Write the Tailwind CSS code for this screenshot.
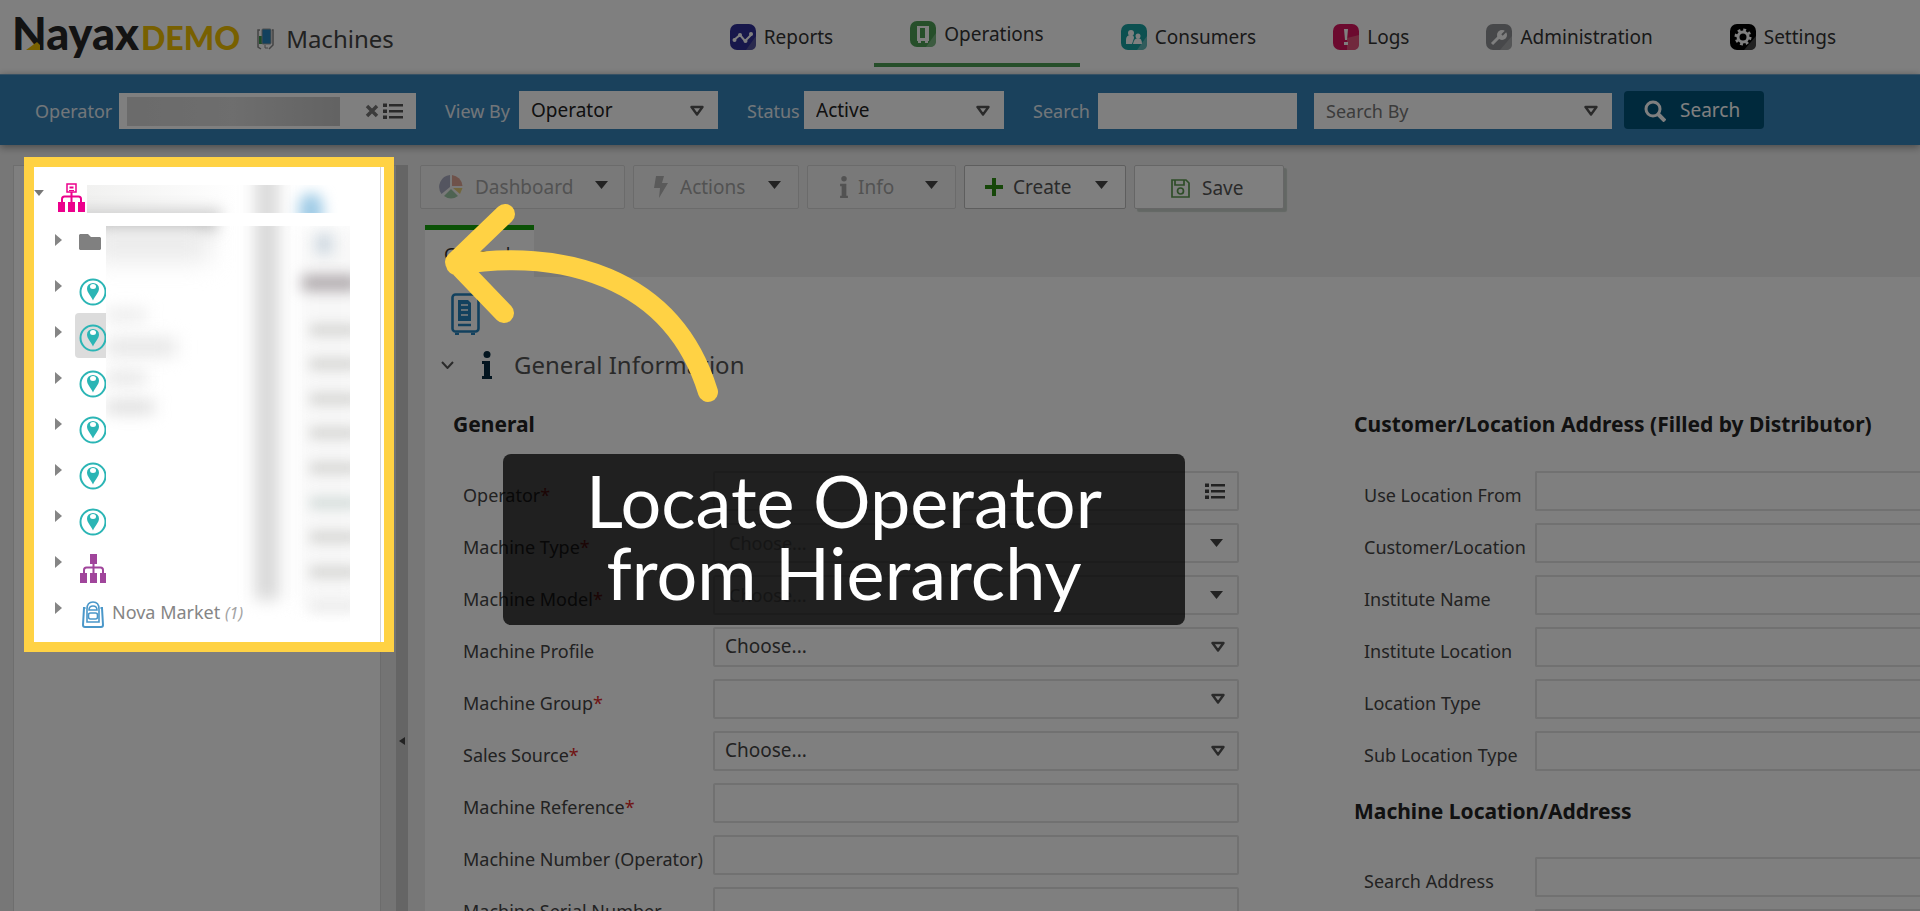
<!DOCTYPE html>
<html lang="en">
<head>
<meta charset="utf-8">
<title>Nayax Demo - Machines</title>
<script src="https://cdn.jsdelivr.net/npm/@tailwindcss/browser@4"></script>
</head>
<body class="font-['Noto_Sans',sans-serif] text-[#333]">
<svg class="hidden">
  <symbol id="tri" viewBox="0 0 14 12"><path d="M1.500 2h11L7 9.500z" fill="none" stroke="currentColor" stroke-width="2.400" stroke-linejoin="round"/></symbol>
  <symbol id="caret" viewBox="0 0 13 8"><path d="M0 0h13L6.500 8z" fill="currentColor"/></symbol>
  <symbol id="right" viewBox="0 0 7 12"><path d="M0 0l7 6-7 6z" fill="currentColor"/></symbol>
  <symbol id="list" viewBox="0 0 20 17"><path d="M0 .5h4v3.500H0zM0 6.500h4v3.500H0zM0 12.500h4v3.500H0zM6 1h14v2.500H6zM6 7h14v2.500H6zM6 13h14v2.500H6z" fill="currentColor"/></symbol>
  <symbol id="info" viewBox="0 0 10 28"><circle cx="5" cy="3.500" r="3.500" fill="currentColor"/><path d="M0 10h8v15h2v3H0v-3h2V13H0z" fill="currentColor"/></symbol>
  <symbol id="pin" viewBox="0 0 28 28"><circle cx="14" cy="14" r="12.500" fill="none" stroke="#2bb5b5" stroke-width="2"/><path d="M14 22.500C12 18 8 14.500 8 10.500a6 5.500 0 0 1 12 0c0 4-4 7.500-6 12z" fill="#2bb5b5"/><ellipse cx="14" cy="8.500" rx="3" ry="2.500" fill="#fff"/></symbol>
  <symbol id="tree" viewBox="0 0 27 29"><path d="M13.500 9v11M4 20v-4q0-2.500 2.500-2.500h14q2.500 0 2.500 2.500v4" fill="none" stroke="currentColor" stroke-width="2"/><path d="M0 19h7v10H0zM10 19h7v10h-7zM20 19h7v10h-7z" fill="currentColor"/></symbol>
</svg>

<div class="relative flex h-screen flex-col overflow-hidden bg-[#efefef]">
  <header class="flex h-[74px] shrink-0 items-center bg-white pl-3 pr-12">
    <div class="relative mb-2 flex items-baseline gap-0.5 font-['Lato',sans-serif] font-black leading-none">
      <span class="text-[45px] text-[#262626]">Nayax</span><span class="text-[32px] text-[#f0c000]">DEMO</span>
      <svg class="absolute left-[14px] top-[31px] h-2 w-3.5" viewBox="0 0 14 8"><path d="M0 8L11 0l3 3v5z" fill="#f0c000"/></svg>
    </div>
    <svg class="ml-4 mt-1 h-[22px] w-[18px]" viewBox="0 0 18 22" fill="none"><path d="M4 2H2v17l3 2M16 2h1v15l-4 4" stroke="#888" stroke-width="1.500"/><path d="M3 8h5v8H3z" fill="#3a9a4c"/><rect x="6" y="1" width="9" height="15" rx="1" fill="#2583bd" stroke="#999"/><path d="M9 17v3h3" stroke="#888"/></svg>
    <h1 class="ml-3 mt-1 text-2xl text-[#444]">Machines</h1>
    <nav class="ml-auto flex h-full items-center gap-[5px] text-[19px]">
      <a href="#" class="flex items-center gap-2 px-9"><svg class="size-[26px]" viewBox="0 0 26 26"><rect width="26" height="26" rx="7" fill="#2e2e96"/><path d="M16 26l10-14v8q0 6-6 6z" fill="#55559c"/><path d="M4 16l6-5 5 6 7-7" fill="none" stroke="#fff" stroke-width="2"/><g fill="#fff"><circle cx="4.500" cy="16" r="2"/><circle cx="10" cy="11" r="2"/><circle cx="15.500" cy="17" r="2"/><circle cx="21" cy="10" r="2"/></g></svg>Reports</a>
      <a href="#" class="relative flex h-full items-center gap-2 px-9 pb-1.5"><svg class="size-[26px]" viewBox="0 0 26 26"><rect width="26" height="26" rx="7" fill="#4c9e55"/><path d="M16 26l10-14v8q0 6-6 6z" fill="#79b780"/><path d="M7 5h12v15H7z" fill="#fff"/><path d="M10 7h5v10h-5z" fill="#4c9e55"/><path d="M8 20h3v2H8zM15 20h3v2h-3z" fill="#fff"/></svg>Operations<span class="absolute inset-x-0 bottom-[7px] h-1 bg-[#4c9e55]"></span></a>
      <a href="#" class="flex items-center gap-2 px-9"><svg class="size-[26px]" viewBox="0 0 26 26"><rect width="26" height="26" rx="7" fill="#18a0a0"/><path d="M16 26l10-14v8q0 6-6 6z" fill="#62b8b8"/><g fill="#fff"><circle cx="10" cy="9" r="3"/><path d="M5 20v-4q0-5 5-5 3 0 3 3l-2 6z"/><circle cx="17" cy="12" r="2.500"/><path d="M12 20q1-6 5-6t4 6z"/></g></svg>Consumers</a>
      <a href="#" class="flex items-center gap-2 px-9"><svg class="size-[26px]" viewBox="0 0 26 26"><rect width="26" height="26" rx="7" fill="#d8145e"/><path d="M14 26V14l12-3v9q0 6-6 6z" fill="#e2527b"/><path d="M11 5h4l-1 11h-2zM11 18h4v3h-4z" fill="#fff"/></svg>Logs</a>
      <a href="#" class="flex items-center gap-2 px-9"><svg class="size-[26px]" viewBox="0 0 26 26"><rect width="26" height="26" rx="7" fill="#8f9194"/><path d="M14 26l12-14v8q0 6-6 6z" fill="#a9abad"/><circle cx="16" cy="11" r="5" fill="#fff"/><path d="M13 13l-7 7" stroke="#fff" stroke-width="3"/><path d="M16 11l4-4" stroke="#8f9194" stroke-width="2"/></svg>Administration</a>
      <a href="#" class="flex items-center gap-2 px-9"><svg class="size-[26px]" viewBox="0 0 26 26"><rect width="26" height="26" rx="7" fill="#000"/><path d="M14 26l12-14v8q0 6-6 6z" fill="#444"/><circle cx="13" cy="13" r="5" fill="none" stroke="#fff" stroke-width="3"/><circle cx="13" cy="13" r="7" fill="none" stroke="#fff" stroke-width="3" stroke-dasharray="2.750 2.750"/></svg>Settings</a>
    </nav>
  </header>

  <form class="z-0 flex h-[71px] shrink-0 items-center border-t border-[#6fa3c8] bg-[#3482b8] pl-[35px] text-lg text-[#e4edf4] shadow-[0_2px_8px_rgba(0,0,0,0.4)]">
    <label for="fop" class="w-[84px] pt-0.5">Operator</label>
    <div class="mt-0.5 flex h-9 w-[297px] items-center bg-white pl-2">
      <input id="fop" class="h-[29px] w-[213px] bg-linear-to-r from-[#d6d6d6] via-[#dcdcdc] to-[#c6c6c6] outline-none">
      <button type="button" aria-label="Clear" class="ml-[25px] text-[#777]"><svg class="size-3.5" viewBox="0 0 14 14"><path d="M2 2l10 10M12 2L2 12" stroke="currentColor" stroke-width="3.500"/></svg></button>
      <button type="button" aria-label="Pick operator" class="ml-1 text-[#555]"><svg class="h-[17px] w-5"><use href="#list"/></svg></button>
    </div>
    <label for="fview" class="ml-[29px] w-[74px] pt-0.5">View By</label>
    <div class="relative"><select id="fview" class="h-[38px] w-[199px] appearance-none bg-white px-3 pt-0.5 text-[19px] text-[#222]"><option>Operator</option></select><svg class="pointer-events-none absolute right-3.5 top-3.5 h-3 w-3.5 text-[#555]"><use href="#tri"/></svg></div>
    <label for="fstat" class="ml-[29px] w-[57px] pt-0.5">Status</label>
    <div class="relative"><select id="fstat" class="h-[38px] w-[200px] appearance-none bg-white px-3 pt-0.5 text-[19px] text-[#222]"><option>Active</option></select><svg class="pointer-events-none absolute right-3.5 top-3.5 h-3 w-3.5 text-[#555]"><use href="#tri"/></svg></div>
    <label for="fq" class="ml-[29px] w-[65px] pt-0.5">Search</label>
    <input id="fq" class="mt-0.5 h-9 w-[199px] bg-white px-3 text-[#222]">
    <div class="relative mt-0.5 ml-[17px]"><select aria-label="Search By" class="h-9 w-[298px] appearance-none bg-white px-3 text-[#777]"><option>Search By</option></select><svg class="pointer-events-none absolute right-3.5 top-3 h-3 w-3.5 text-[#555]"><use href="#tri"/></svg></div>
    <button type="button" class="ml-3 flex h-[38px] w-[140px] items-center gap-3.5 rounded-sm bg-[#005279] pl-5 pt-0.5 text-[19px] text-white"><svg class="size-[22px]" viewBox="0 0 22 22" fill="none" stroke="#fff"><circle cx="9" cy="9" r="7" stroke-width="3"/><path d="M14 14l7 7" stroke-width="4"/></svg>Search</button>
  </form>

  <main class="flex min-h-0 flex-1 pt-5">
    <aside class="ml-[13px] flex w-[383px] shrink-0 border-l border-t border-[#dcdcdc] bg-white">
      <!-- Spotlighted hierarchy tree, raised above the page dimmer -->
      <div class="relative z-20 ml-5 mt-px h-[475px] w-[350px] shrink-0 bg-white ring-[10px] ring-[#ffd244]">
        <span class="absolute inset-y-0 right-[3px] w-px bg-[#d4d4d8]"></span>
        <ul class="text-lg text-[#858585]">
          <li class="flex h-[50px] pt-4"><svg class="mt-[7px] h-1.5 w-2.5 text-[#777]"><use href="#caret"/></svg><svg class="ml-3.5 h-[29px] w-[27px] text-[#ec008c]"><use href="#tree"/><rect x="9" y="1" width="9" height="8" fill="#fff" stroke="#ec008c" stroke-width="1.500"/><path d="M11.500 3.500h4v2h-4zM11 7h5v1h-5z" fill="#ec008c"/></svg></li>
          <li class="flex h-[46px] items-center pl-[21px]"><svg class="h-3 w-[7px]"><use href="#right"/></svg><svg class="ml-[17px] mt-1 h-4 w-[22px]" viewBox="0 0 22 16"><path d="M1 0h8l3 3h9l1 1v11l-1 1H1l-1-1V1z" fill="#808080"/></svg></li>
          <li class="flex h-[46px] items-center pl-[21px]"><svg class="h-3 w-[7px]"><use href="#right"/></svg><svg class="ml-[17px] mt-3 size-7"><use href="#pin"/></svg></li>
          <li class="flex h-[46px] items-center pl-[21px]"><svg class="h-3 w-[7px]"><use href="#right"/></svg><span class="ml-[13px] mt-1.5 flex h-[45px] items-center rounded-l-sm bg-[#dcdcdc] pl-1"><svg class="mt-1.5 size-7"><use href="#pin"/></svg></span></li>
          <li class="flex h-[46px] items-center pl-[21px]"><svg class="h-3 w-[7px]"><use href="#right"/></svg><svg class="ml-[17px] mt-3 size-7"><use href="#pin"/></svg></li>
          <li class="flex h-[46px] items-center pl-[21px]"><svg class="h-3 w-[7px]"><use href="#right"/></svg><svg class="ml-[17px] mt-3 size-7"><use href="#pin"/></svg></li>
          <li class="flex h-[46px] items-center pl-[21px]"><svg class="h-3 w-[7px]"><use href="#right"/></svg><svg class="ml-[17px] mt-3 size-7"><use href="#pin"/></svg></li>
          <li class="flex h-[46px] items-center pl-[21px]"><svg class="h-3 w-[7px]"><use href="#right"/></svg><svg class="ml-[17px] mt-3 size-7"><use href="#pin"/></svg></li>
          <li class="flex h-[46px] items-center pl-[21px]"><svg class="h-3 w-[7px]"><use href="#right"/></svg><svg class="ml-[18px] mt-3 h-[29px] w-[27px] text-[#a0459b]"><use href="#tree"/><path d="M10 0h7v10h-7z" fill="currentColor"/></svg></li>
          <li class="flex h-[46px] items-center pl-[21px]"><svg class="h-3 w-[7px]"><use href="#right"/></svg><svg class="ml-5 mt-3 h-[27px] w-[22px]" viewBox="0 0 22 27" fill="none" stroke="#4a97c9" stroke-width="1.600"><path d="M3.500 7H2L1 24q0 2 2 2h16q2 0 2-2L20 7h-1.500" stroke-width="2"/><path d="M5 21V8q0-7 6-7t6 7v13z"/><path d="M7 9q0-4 4-4t4 4z"/><rect x="6.500" y="12" width="9" height="6" rx="2"/></svg><span class="ml-2 mt-2">Nova Market <i class="text-base text-[#a3a3a3]">(1)</i></span></li>
        </ul>
        <!-- Redacted names -->
        <div class="absolute left-[53px] top-[18px] h-7 w-[253px] overflow-hidden bg-linear-to-r from-[#f1f1f0] to-white to-60%">
          <span class="absolute -left-4 top-6 h-6 w-[150px] bg-[#cfcfcf] blur-[7px]"></span>
          <span class="absolute left-[168px] -top-4 h-16 w-6 bg-[#dadada] blur-[8px]"></span>
          <span class="absolute left-[212px] top-2 h-9 w-6 rounded-full bg-[#9fcbe6] blur-[7px]"></span>
        </div>
        <div class="absolute left-[72px] top-[59px] h-[396px] w-[244px] overflow-hidden">
          <span class="absolute inset-x-0 top-0 h-[365px] bg-white"></span>
          <span class="absolute -left-4 -top-3 h-4 w-[125px] bg-[#999] blur-[8px]"></span>
          <span class="absolute -left-4 top-0 h-9 w-[120px] bg-[#ebebeb] blur-[12px]"></span>
          <span class="absolute left-0 top-[83px] h-3 w-10 bg-[#e9e9e9] blur-[8px]"></span>
          <span class="absolute left-0 top-[113px] h-4 w-[70px] bg-[#e2e2e2] blur-[9px]"></span>
          <span class="absolute left-0 top-[146px] h-3 w-10 bg-[#e2e2e2] blur-[8px]"></span>
          <span class="absolute left-0 top-[175px] h-3 w-12 bg-[#d8d8d8] blur-[8px]"></span>
          <span class="absolute left-[149px] -top-4 h-[390px] w-6 bg-[#d8d8d8] blur-[8px]"></span>
          <span class="absolute -right-2 top-0 h-[380px] w-[56px] bg-[#f7f7f7] blur-[10px]"></span>
          <span class="absolute left-[210px] top-2 h-5 w-4 bg-[#ccd7e0] blur-[7px]"></span>
          <span class="absolute -right-2 top-[49px] h-4 w-14 bg-[#b0aaad] blur-[7px]"></span>
          <span class="absolute -right-2 top-[98px] h-3 w-12 bg-[#d8d8d6] blur-[6px]"></span>
          <span class="absolute -right-2 top-[132px] h-3 w-12 bg-[#d8d8d6] blur-[6px]"></span>
          <span class="absolute -right-2 top-[167px] h-3 w-12 bg-[#d8d8d6] blur-[6px]"></span>
          <span class="absolute -right-2 top-[201px] h-3 w-12 bg-[#d8d8d6] blur-[6px]"></span>
          <span class="absolute -right-2 top-[236px] h-3 w-12 bg-[#d8d8d6] blur-[6px]"></span>
          <span class="absolute -right-2 top-[271px] h-3 w-12 bg-[#d6dedc] blur-[6px]"></span>
          <span class="absolute -right-2 top-[305px] h-3 w-12 bg-[#d8d8d6] blur-[6px]"></span>
          <span class="absolute -right-2 top-[340px] h-3 w-12 bg-[#d8d8d6] blur-[6px]"></span>
          <span class="absolute -right-2 top-[374px] h-3 w-12 bg-[#ececec] blur-[6px]"></span>
        </div>
      </div>
      <div class="-ml-1 flex-1 border-l border-[#d8d8d8] bg-[#e8e8e8]"></div>
    </aside>
    <div class="flex w-3 shrink-0 items-start justify-center bg-[#cacaca] pt-[572px]"><svg class="h-2 w-1.5" viewBox="0 0 6 8"><path d="M6 0v8L0 4z" fill="#444"/></svg></div>

    <section class="min-w-0 flex-1">
      <div class="ml-3 flex h-11 gap-2 text-[19px]">
        <button class="flex w-[205px] items-center rounded-xs border border-[#d6d6d6] bg-[#f3f3f3] pl-[18px] text-[#a5a5a5]"><svg class="mr-3 size-6" viewBox="0 0 24 24"><path d="M11 12V0A12 12 0 0 0 2.500 19z" fill="#a9abc0"/><path d="M13 0v11h10.500A12 12 0 0 0 13 0z" fill="#dfa595"/><path d="M14 13h9.500l-2.500 6z" fill="#e5cf7a"/><path d="M12 14l7 7q-7 5-14 0z" fill="#9dc7a5"/></svg>Dashboard<svg class="ml-auto mr-4 mb-1 h-2 w-[13px] text-[#444]"><use href="#caret"/></svg></button>
        <button class="flex w-[166px] items-center rounded-xs border border-[#d6d6d6] bg-[#f3f3f3] pl-5 text-[#a5a5a5]"><svg class="mr-3 h-[22px] w-3.5" viewBox="0 0 14 22"><path d="M2 0h8L8 7h6L5 22l1-10H0z" fill="#b4b4b4"/></svg>Actions<svg class="ml-auto mr-[17px] mb-1 h-2 w-[13px] text-[#444]"><use href="#caret"/></svg></button>
        <button class="flex w-[149px] items-center rounded-xs border border-[#d6d6d6] bg-[#f3f3f3] pl-8 text-[#a5a5a5]"><svg class="mr-2.5 h-[22px] w-2" viewBox="0 0 10 28"><use href="#info"/></svg>Info<svg class="ml-auto mr-[17px] mb-1 h-2 w-[13px] text-[#444]"><use href="#caret"/></svg></button>
        <button class="flex w-[162px] items-center rounded-xs border border-[#bcbcbc] bg-white pl-5 text-[#555]"><svg class="mr-2.5 size-[18px]" viewBox="0 0 18 18"><path d="M9 0v18M0 9h18" stroke="#2c8e12" stroke-width="4"/></svg>Create<svg class="ml-auto mr-[17px] mb-1 h-2 w-[13px] text-[#444]"><use href="#caret"/></svg></button>
        <button class="flex w-[150px] items-center rounded-xs border border-[#ccc] bg-white pl-9 pt-0.5 text-[#555] shadow-[3px_3px_1px_#c6cfc8]"><svg class="mr-3 size-[19px]" viewBox="0 0 19 19" fill="none" stroke="#5d9a50" stroke-width="1.700"><path d="M1 1h14l3 3v14H1zM4 1v5h9V1"/><circle cx="9.500" cy="12" r="3"/></svg>Save</button>
      </div>
      <div class="mt-4 ml-[17px] w-[109px] border-t-[5px] border-[#17a50c] bg-white pt-3 pl-[19px] text-lg leading-6"><a href="#" class="block h-[35px]">General</a></div>
      <div class="ml-[17px] bg-white pl-4">
        <svg class="ml-2.5 translate-y-4 h-[42px] w-[29px]" viewBox="0 0 29 42" fill="none" stroke="#2583bd"><rect x="1.500" y="1.500" width="26" height="37" rx="3" stroke-width="2.600"/><path d="M7 7h10l3 3v18H7z" fill="#2583bd" stroke="none"/><path d="M10 12h7M10 17h7M10 22h7" stroke="#fff" stroke-width="1.500"/><path d="M7 32h13M4 41h4M20 41h4" stroke-width="2.400"/></svg>
        <div class="flex h-[86px] items-center pt-1.5">
          <svg class="h-2 w-[13px]" viewBox="0 0 13 8"><path d="M1 1l5.500 6L12 1" fill="none" stroke="#555" stroke-width="2"/></svg>
          <svg class="ml-7 h-7 w-2.5 text-[#062a40]"><use href="#info"/></svg>
          <h2 class="ml-[22px] text-2xl text-[#555]">General Information</h2>
        </div>
        <div class="flex">
          <div class="w-[798px] shrink-0">
            <h3 class="ml-3 mt-[3px] mb-[31px] h-8 text-[21px] leading-8 font-bold text-[#222]">General</h3>
            <div class="flex flex-col gap-3 pl-[22px] text-lg text-[#444]">
              <div class="flex h-10"><label for="m1" class="w-[250px] pt-2.5">Operator<span class="text-[#e02828]">*</span></label><div class="relative"><input id="m1" class="h-10 w-[526px] rounded-xs border-2 border-[#e2e2e2]"><svg class="absolute right-3.5 top-3 h-[17px] w-5"><use href="#list"/></svg></div></div>
              <div class="flex h-10"><label for="m2" class="w-[250px] pt-2.5">Machine Type<span class="text-[#e02828]">*</span></label><div class="relative"><select id="m2" class="h-10 w-[526px] appearance-none rounded-xs border-2 border-[#e2e2e2] px-3.5 text-[#aaa]"><option>Choose...</option></select><svg class="absolute right-4 top-4 h-2 w-[13px]"><use href="#caret"/></svg></div></div>
              <div class="flex h-10"><label for="m3" class="w-[250px] pt-2.5">Machine Model<span class="text-[#e02828]">*</span></label><div class="relative"><select id="m3" class="h-10 w-[526px] appearance-none rounded-xs border-2 border-[#e2e2e2] px-3.5 text-[#aaa]"><option>Choose...</option></select><svg class="absolute right-4 top-4 h-2 w-[13px]"><use href="#caret"/></svg></div></div>
              <div class="flex h-10"><label for="m4" class="w-[250px] pt-2.5">Machine Profile</label><div class="relative"><select id="m4" class="h-10 w-[526px] appearance-none rounded-xs border-2 border-[#e2e2e2] px-2.5 text-[19px]"><option>Choose...</option></select><svg class="absolute right-3.5 top-3.5 h-3 w-3.5 text-[#555]"><use href="#tri"/></svg></div></div>
              <div class="flex h-10"><label for="m5" class="w-[250px] pt-2.5">Machine Group<span class="text-[#e02828]">*</span></label><div class="relative"><select id="m5" class="h-10 w-[526px] appearance-none rounded-xs border-2 border-[#e2e2e2] px-2.5 text-[19px]"><option></option></select><svg class="absolute right-3.5 top-3.5 h-3 w-3.5 text-[#555]"><use href="#tri"/></svg></div></div>
              <div class="flex h-10"><label for="m6" class="w-[250px] pt-2.5">Sales Source<span class="text-[#e02828]">*</span></label><div class="relative"><select id="m6" class="h-10 w-[526px] appearance-none rounded-xs border-2 border-[#e2e2e2] px-2.5 text-[19px]"><option>Choose...</option></select><svg class="absolute right-3.5 top-3.5 h-3 w-3.5 text-[#555]"><use href="#tri"/></svg></div></div>
              <div class="flex h-10"><label for="m7" class="w-[250px] pt-2.5">Machine Reference<span class="text-[#e02828]">*</span></label><input id="m7" class="h-10 w-[526px] rounded-xs border-2 border-[#e2e2e2]"></div>
              <div class="flex h-10"><label for="m8" class="w-[250px] pt-2.5">Machine Number (Operator)</label><input id="m8" class="h-10 w-[526px] rounded-xs border-2 border-[#e2e2e2]"></div>
              <div class="flex h-10"><label for="m9" class="w-[250px] pt-2.5">Machine Serial Number</label><input id="m9" class="h-10 w-[526px] rounded-xs border-2 border-[#e2e2e2]"></div>
            </div>
          </div>
          <div class="ml-[103px] min-w-0 flex-1">
            <h3 class="ml-3 mt-[3px] mb-[31px] h-8 text-[21px] leading-8 font-bold whitespace-nowrap text-[#222]">Customer/Location Address (Filled by Distributor)</h3>
            <div class="flex flex-col gap-3 pl-[22px] text-lg text-[#444]">
              <div class="flex h-10"><label for="c1" class="w-[171px] shrink-0 pt-2.5">Use Location From</label><input id="c1" class="h-10 min-w-0 flex-1 rounded-l-xs border-2 border-r-0 border-[#e2e2e2]"></div>
              <div class="flex h-10"><label for="c2" class="w-[171px] shrink-0 pt-2.5">Customer/Location</label><input id="c2" class="h-10 min-w-0 flex-1 rounded-l-xs border-2 border-r-0 border-[#e2e2e2]"></div>
              <div class="flex h-10"><label for="c3" class="w-[171px] shrink-0 pt-2.5">Institute Name</label><input id="c3" class="h-10 min-w-0 flex-1 rounded-l-xs border-2 border-r-0 border-[#e2e2e2]"></div>
              <div class="flex h-10"><label for="c4" class="w-[171px] shrink-0 pt-2.5">Institute Location</label><input id="c4" class="h-10 min-w-0 flex-1 rounded-l-xs border-2 border-r-0 border-[#e2e2e2]"></div>
              <div class="flex h-10"><label for="c5" class="w-[171px] shrink-0 pt-2.5">Location Type</label><input id="c5" class="h-10 min-w-0 flex-1 rounded-l-xs border-2 border-r-0 border-[#e2e2e2]"></div>
              <div class="flex h-10"><label for="c6" class="w-[171px] shrink-0 pt-2.5">Sub Location Type</label><input id="c6" class="h-10 min-w-0 flex-1 rounded-l-xs border-2 border-r-0 border-[#e2e2e2]"></div>
            </div>
            <h3 class="ml-3 mt-6 mb-[30px] h-8 text-[21px] leading-8 font-bold whitespace-nowrap text-[#222]">Machine Location/Address</h3>
            <div class="flex flex-col gap-3 pl-[22px] text-lg text-[#444]">
              <div class="flex h-10"><label for="c7" class="w-[171px] shrink-0 pt-2.5">Search Address</label><input id="c7" class="h-10 min-w-0 flex-1 rounded-l-xs border-2 border-r-0 border-[#e2e2e2]"></div>
              <div class="flex h-10"><span class="w-[171px] shrink-0"></span><input aria-label="Address details" class="h-10 min-w-0 flex-1 rounded-l-xs border-2 border-r-0 border-[#e2e2e2]"></div>
            </div>
          </div>
        </div>
      </div>
    </section>
  </main>

  <!-- Page dimmer, pointer arrow and tour caption -->
  <div class="pointer-events-none absolute inset-0 z-10 bg-black/50"></div>
  <svg class="pointer-events-none absolute left-[440px] top-[200px] z-30 h-[210px] w-[290px]" viewBox="440 200 290 210" fill="none" stroke="#ffd244" stroke-width="20" stroke-linecap="round" stroke-linejoin="round"><path d="M505 214L455 262l49 51M456 265C560 248 672 275 708 392"/></svg>
  <div class="absolute left-[503px] top-[454px] z-30 h-[171px] w-[682px] rounded-lg bg-black/75 pt-2.5 text-center font-['Lato',sans-serif] text-7xl leading-[72px] text-white">Locate Operator<br>from Hierarchy</div>
</div>
</body>
</html>
